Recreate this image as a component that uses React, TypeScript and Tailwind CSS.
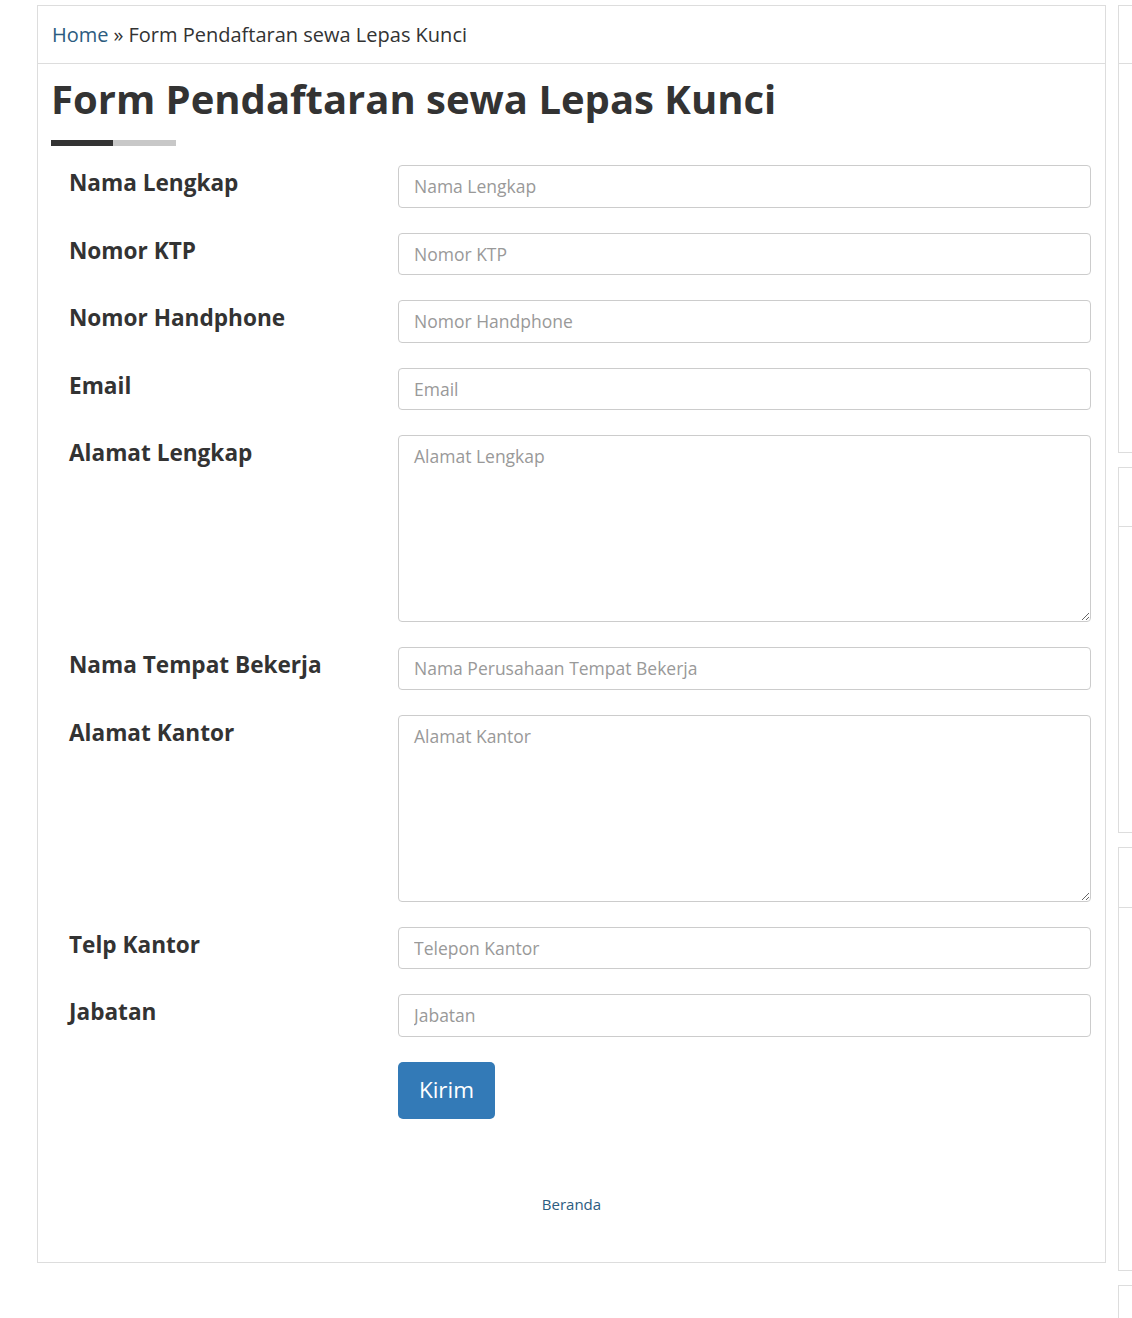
import React from "react";

const font = { fontFamily: '"Open Sans", "Noto Sans", sans-serif' };

function Row({ label, placeholder, area }: { label: string; placeholder: string; area?: boolean }) {
  return (
    <div className="grid grid-cols-[347px_693px]">
      <label className="pl-[18px] pt-[5px] text-[22.6px] leading-[26px] font-bold text-[#333]">{label}</label>
      {area ? (
        <textarea
          placeholder={placeholder}
          className="h-[187px] w-full rounded-[4px] border border-[#ccc] bg-white px-[15px] py-[8px] text-[17.5px] leading-[24px] text-[#555] placeholder:text-[#999] outline-none"
          style={font}
        />
      ) : (
        <input
          placeholder={placeholder}
          className="h-[42.5px] w-full rounded-[4px] border border-[#ccc] bg-white px-[15px] text-[17.5px] text-[#555] placeholder:text-[#999] outline-none"
          style={font}
        />
      )}
    </div>
  );
}

export default function App() {
  return (
    <div className="w-[1132px] h-[1318px] overflow-hidden bg-white" style={font}>
      <div className="flex pt-[5px] pl-[37px] gap-[12px]">
        <div className="w-[1069px] h-[1258px] shrink-0 border border-[#ddd] flex flex-col">
          <div className="h-[58px] border-b border-[#ddd] px-[14px] flex items-center text-[20px] text-[#333]">
            <span className="text-[#2c5c80]">Home</span>
            <span className="mx-[5px]">»</span>
            <span>Form Pendaftaran sewa Lepas Kunci</span>
          </div>
          <div className="px-[13px]">
            <h1 className="mt-[8px] text-[40px] leading-[54px] font-bold text-[#333]">Form Pendaftaran sewa Lepas Kunci</h1>
            <div className="mt-[14px] flex h-[6px] w-[125px]">
              <div className="w-[62px] bg-[#333]" />
              <div className="flex-1 bg-[#c8c8c8]" />
            </div>
            <form className="mt-[19px] flex flex-col gap-[25px]">
              <Row label="Nama Lengkap" placeholder="Nama Lengkap" />
              <Row label="Nomor KTP" placeholder="Nomor KTP" />
              <Row label="Nomor Handphone" placeholder="Nomor Handphone" />
              <Row label="Email" placeholder="Email" />
              <Row label="Alamat Lengkap" placeholder="Alamat Lengkap" area />
              <Row label="Nama Tempat Bekerja" placeholder="Nama Perusahaan Tempat Bekerja" />
              <Row label="Alamat Kantor" placeholder="Alamat Kantor" area />
              <Row label="Telp Kantor" placeholder="Telepon Kantor" />
              <Row label="Jabatan" placeholder="Jabatan" />
              <div className="grid grid-cols-[347px_693px]">
                <div />
                <div>
                  <button
                    type="button"
                    className="h-[57px] w-[97px] rounded-[5px] bg-[#337ab7] text-[22.5px] text-white"
                    style={font}
                  >
                    Kirim
                  </button>
                </div>
              </div>
            </form>
            <div className="mt-[74px] text-center text-[15px] text-[#2c5c80]">Beranda</div>
          </div>
        </div>
        <div className="w-[300px] shrink-0 flex flex-col gap-[14px]">
          <div className="h-[448px] border border-[#ddd]">
            <div className="h-[58px] border-b border-[#ddd]" />
          </div>
          <div className="h-[366px] border border-[#ddd]">
            <div className="h-[59px] border-b border-[#ddd]" />
          </div>
          <div className="h-[424px] border border-[#ddd]">
            <div className="h-[60px] border-b border-[#ddd]" />
          </div>
          <div className="h-[200px] border border-[#ddd]" />
        </div>
      </div>
    </div>
  );
}
